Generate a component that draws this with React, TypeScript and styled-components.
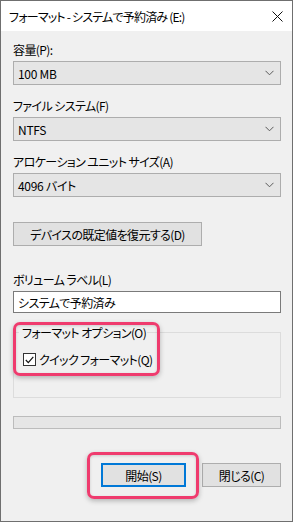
import React from "react";
import styled, { createGlobalStyle } from "styled-components";

const GlobalStyle = createGlobalStyle`
  html, body {
    margin: 0;
    padding: 0;
    background: #ffffff;
  }
  body {
    font-family: "Noto Sans CJK JP", "Noto Sans", sans-serif;
    font-size: 12px;
    font-feature-settings: "palt" 1;
    letter-spacing: -0.6px;
    color: #000;
  }
`;

const Window = styled.div`
  position: relative;
  width: 291px;
  height: 520px;
  border: 1px solid #6f6f6f;
  background: #f0f0f0;
  display: flex;
  flex-direction: column;
`;

const TitleBar = styled.div`
  height: 30px;
  background: #ffffff;
  display: flex;
  align-items: center;
  justify-content: space-between;
  padding: 0 9px 0 8px;
`;

const Title = styled.span`
  font-size: 12px;
  letter-spacing: -0.8px;
`;

const Body = styled.div`
  flex: 1;
  display: flex;
  flex-direction: column;
  padding: 11px 11px 0 12px;
`;

const Label = styled.div<{ $gap?: number }>`
  height: 16px;
  line-height: 16px;
  font-size: 12px;
  margin-top: ${(p) => p.$gap ?? 0}px;
  margin-bottom: 3px;
`;

const Select = styled.div`
  height: 22px;
  border: 1px solid #adadad;
  background: #e5e5e5;
  display: flex;
  align-items: center;
  justify-content: space-between;
  padding: 0 6px 0 4px;
  font-size: 12px;
  letter-spacing: -0.3px;
`;

const PushButton = styled.div<{ $w: number; $focus?: boolean }>`
  width: ${(p) => p.$w}px;
  height: ${(p) => (p.$focus ? 20 : 22)}px;
  border: ${(p) => (p.$focus ? "2px solid #0078d7" : "1px solid #adadad")};
  background: #e1e1e1;
  display: flex;
  align-items: center;
  justify-content: center;
  font-size: 12px;
  box-sizing: content-box;
`;

const TextInput = styled.div`
  height: 20px;
  border: 1px solid #7a7a7a;
  background: #ffffff;
  display: flex;
  align-items: center;
  padding: 0 4px;
  font-size: 12px;
`;

const GroupBox = styled.div`
  margin-top: 19px;
  height: 64px;
  border: 1px solid #dcdcdc;
  position: relative;
  display: flex;
  flex-direction: column;
  padding: 0 9px;
`;

const GroupLegend = styled.div`
  margin-top: -8px;
  align-self: flex-start;
  background: #f0f0f0;
  padding: 0 1px 0 3px;
  margin-left: -4px;
  height: 16px;
  line-height: 16px;
`;

const CheckRow = styled.div`
  margin-top: 10px;
  height: 17px;
  display: flex;
  align-items: center;
  gap: 3px;
`;

const CheckBox = styled.div`
  width: 11px;
  height: 11px;
  border: 1px solid #333333;
  background: #ffffff;
  display: flex;
  align-items: center;
  justify-content: center;
`;

const Progress = styled.div`
  margin-top: 18px;
  height: 11px;
  border: 1px solid #bcbcbc;
  background: #e6e6e6;
`;

const ButtonRow = styled.div`
  margin-top: 34px;
  display: flex;
  justify-content: flex-end;
  gap: 16px;
`;

const RestoreWrap = styled.div`
  margin-top: 25px;
`;

const Highlight = styled.div<{ $x: number; $y: number; $w: number; $h: number }>`
  position: absolute;
  left: ${(p) => p.$x - 1}px;
  top: ${(p) => p.$y - 1}px;
  width: ${(p) => p.$w}px;
  height: ${(p) => p.$h}px;
  border: 3px solid #ef3b6e;
  border-radius: 7px;
  box-shadow: 0 2px 5px rgba(0, 0, 0, 0.25), inset 0 1px 3px rgba(0, 0, 0, 0.15);
  box-sizing: border-box;
  pointer-events: none;
`;

const Chevron = () => (
  <svg width="9" height="6" viewBox="0 0 9 6">
    <path d="M0.5 0.8 L4.5 4.8 L8.5 0.8" fill="none" stroke="#5a5a5a" strokeWidth="1" />
  </svg>
);

const CloseIcon = () => (
  <svg width="11" height="11" viewBox="0 0 11 11">
    <path d="M0.5 0.5 L10.5 10.5 M10.5 0.5 L0.5 10.5" stroke="#111" strokeWidth="1" />
  </svg>
);

const Check = () => (
  <svg width="9" height="8" viewBox="0 0 9 8">
    <path d="M0.8 4 L3.3 6.6 L8.3 0.8" fill="none" stroke="#111" strokeWidth="1.2" />
  </svg>
);

export default function App() {
  return (
    <>
      <GlobalStyle />
      <Window>
        <TitleBar>
          <Title>フォーマット - システムで予約済み (E:)</Title>
          <CloseIcon />
        </TitleBar>
        <Body>
          <Label>容量(P):</Label>
          <Select>
            <span>100 MB</span>
            <Chevron />
          </Select>
          <Label $gap={13}>ファイル システム(F)</Label>
          <Select>
            <span>NTFS</span>
            <Chevron />
          </Select>
          <Label $gap={13}>アロケーション ユニット サイズ(A)</Label>
          <Select>
            <span>4096 バイト</span>
            <Chevron />
          </Select>
          <RestoreWrap>
            <PushButton $w={187}>デバイスの既定値を復元する(D)</PushButton>
          </RestoreWrap>
          <Label $gap={26}>ボリューム ラベル(L)</Label>
          <TextInput>システムで予約済み</TextInput>
          <GroupBox>
            <GroupLegend>フォーマット オプション(O)</GroupLegend>
            <CheckRow>
              <CheckBox>
                <Check />
              </CheckBox>
              <span>クイック フォーマット(Q)</span>
            </CheckRow>
          </GroupBox>
          <Progress />
          <ButtonRow>
            <PushButton $w={81} $focus>
              開始(S)
            </PushButton>
            <PushButton $w={77}>閉じる(C)</PushButton>
          </ButtonRow>
        </Body>
        <Highlight $x={13} $y={322} $w={147} $h={54} />
        <Highlight $x={87} $y={452} $w={112} $h={47} />
      </Window>
    </>
  );
}
